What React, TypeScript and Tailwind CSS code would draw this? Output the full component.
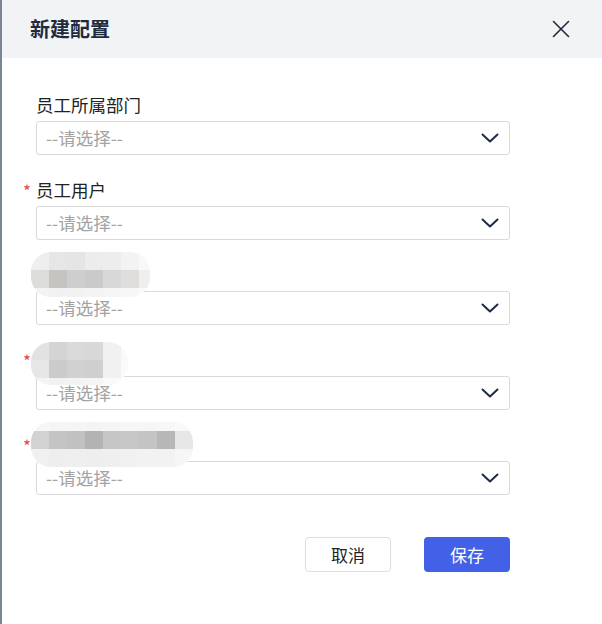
import { X } from "lucide-react";

type Row = { h: number; colors: string[] };

type Field = {
  label?: string;
  required?: boolean;
  mosaic?: { top: number; width: number; rows: Row[] };
};

const FIELDS: Field[] = [
  { label: "员工所属部门" },
  { label: "员工用户", required: true },
  {
    mosaic: {
      top: -11,
      width: 119,
      rows: [
        { h: 18, colors: ["#eeeeee", "#e6e6e6", "#e5e5e5", "#ececec", "#ededed", "#f3f3f3", "#f8f8f8"] },
        { h: 18, colors: ["#dcdcdb", "#c5c4c1", "#cdcfcf", "#c9cac9", "#d7d8d7", "#dfdedc", "#eeeeee"] },
        { h: 9, colors: ["#f3f3f3", "#f1f1f1", "#f2f2f2", "#f4f4f4", "#f5f5f5", "#f7f7f7", "#fafafa"] },
      ],
    },
  },
  {
    required: true,
    mosaic: {
      top: -6,
      width: 97,
      rows: [
        { h: 18, colors: ["#e2e2e2", "#d4d4d4", "#dadada", "#d8d8d8", "#f1f1f1", "#fafafa"] },
        { h: 18, colors: ["#e6e6e6", "#cbcbcb", "#d1d1d1", "#cfcfcf", "#f1f1f1", "#fafafa"] },
        { h: 7, colors: ["#f4f4f4", "#f2f2f2", "#f3f3f3", "#f5f5f5", "#fafafa", "#fcfcfc"] },
      ],
    },
  },
  {
    required: true,
    mosaic: {
      top: -11,
      width: 162,
      rows: [
        { h: 9, colors: ["#f6f6f6", "#f5f5f5", "#f5f5f5", "#f4f4f4", "#f5f5f5", "#f6f6f6", "#f6f6f6", "#f7f7f7", "#f9f9f9"] },
        { h: 18, colors: ["#d2d2d2", "#c4c4c4", "#c1c1c1", "#b3b3b3", "#c6c6c6", "#c7c7c7", "#c4c4c4", "#b7b7b7", "#e6e6e6"] },
        { h: 18, colors: ["#f0f0f0", "#eeeeee", "#efefef", "#eeeeee", "#efefef", "#f1f1f1", "#f2f2f2", "#f2f2f2", "#f6f6f6"] },
      ],
    },
  },
];

function Mosaic({ top, width, rows }: { top: number; width: number; rows: Row[] }) {
  return (
    <div
      className="absolute left-[-5px] z-10 flex flex-col overflow-hidden rounded-[20px] blur-[0.6px]"
      style={{ top, width }}
    >
      {rows.map((row, i) => (
        <div key={i} className="flex" style={{ height: row.h }}>
          {row.colors.map((c, j) => (
            <div key={j} className="w-[18px] shrink-0" style={{ background: c }} />
          ))}
        </div>
      ))}
    </div>
  );
}

function Chevron() {
  return (
    <svg width="18" height="10" viewBox="0 0 18 10" fill="none">
      <path d="M1.5 1.5 L9 8.5 L16.5 1.5" stroke="#1c2b4a" strokeWidth="2" strokeLinecap="round" strokeLinejoin="round" />
    </svg>
  );
}

function SelectField({ field }: { field: Field }) {
  return (
    <div className="flex flex-col gap-[4px]">
      <div className="relative flex h-[24px] items-center">
        {field.required && (
          <span className="absolute left-[-13px] top-[4px] text-[17px] leading-none text-[#e5484d]">*</span>
        )}
        {field.label && <span className="text-[17.5px] text-[#222]">{field.label}</span>}
        {field.mosaic && (
          <Mosaic top={field.mosaic.top} width={field.mosaic.width} rows={field.mosaic.rows} />
        )}
      </div>
      <div className="flex h-[34px] items-center justify-between rounded-[3px] border border-[#d9d9dc] bg-white pl-[9px] pr-[10px]">
        <span className="text-[17.5px] text-[#a3a3a3]">--请选择--</span>
        <Chevron />
      </div>
    </div>
  );
}

export default function App() {
  return (
    <div
      className="flex h-[624px] w-[602px] overflow-hidden bg-white"
      style={{ fontFamily: '"Noto Sans CJK SC", "Noto Sans", sans-serif' }}
    >
      {/* backdrop sliver */}
      <div className="w-[2px] shrink-0 bg-[#7b8396]" />

      <div className="flex flex-1 flex-col">
        <div className="flex h-[58px] items-center justify-between bg-[#f1f3f5] pl-[28px] pr-[26px]">
          <h2 className="text-[20px] font-bold text-[#1f2b3d]">新建配置</h2>
          <X size={30} strokeWidth={1.3} color="#1f2b3d" />
        </div>

        <div className="flex w-[508px] flex-col gap-[23px] pl-[34px] pt-[35px]">
          {FIELDS.map((f, i) => (
            <SelectField key={i} field={f} />
          ))}
        </div>

        <div className="flex w-[508px] justify-end gap-[33px] pt-[42px]">
          <button className="h-[35px] w-[86px] rounded-[4px] border border-[#dedede] bg-white text-[17px] text-[#222]">
            取消
          </button>
          <button className="h-[35px] w-[86px] rounded-[4px] bg-[#4361e6] text-[17px] text-white">
            保存
          </button>
        </div>
      </div>
    </div>
  );
}
